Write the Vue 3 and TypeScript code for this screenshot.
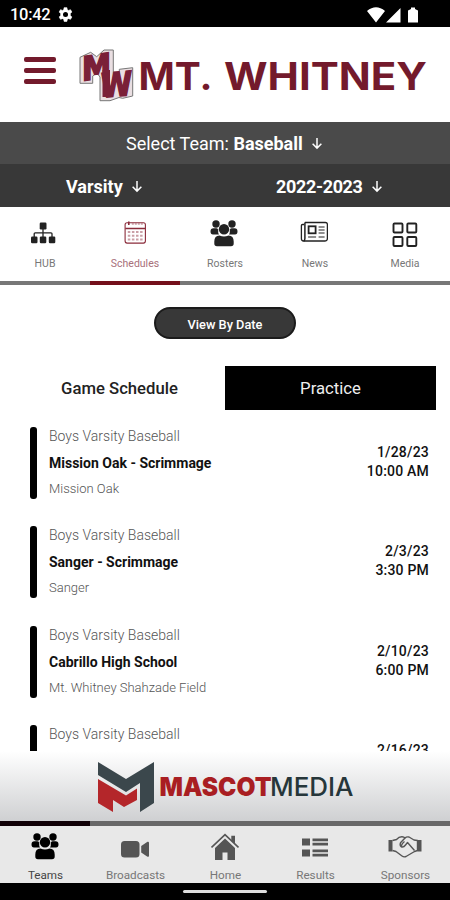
<script setup lang="ts">
interface Game {
  team: string
  title: string
  place: string
  date: string
  time: string
}

interface NavItem {
  id: string
  label: string
}

const topTabs: NavItem[] = [
  { id: 'hub', label: 'HUB' },
  { id: 'schedules', label: 'Schedules' },
  { id: 'people', label: 'Rosters' },
  { id: 'news', label: 'News' },
  { id: 'media', label: 'Media' },
]

const bottomTabs: NavItem[] = [
  { id: 'people', label: 'Teams' },
  { id: 'broadcasts', label: 'Broadcasts' },
  { id: 'home', label: 'Home' },
  { id: 'results', label: 'Results' },
  { id: 'sponsors', label: 'Sponsors' },
]

const games: Game[] = [
  { team: 'Boys Varsity Baseball', title: 'Mission Oak - Scrimmage', place: 'Mission Oak', date: '1/28/23', time: '10:00 AM' },
  { team: 'Boys Varsity Baseball', title: 'Sanger - Scrimmage', place: 'Sanger', date: '2/3/23', time: '3:30 PM' },
  { team: 'Boys Varsity Baseball', title: 'Cabrillo High School', place: 'Mt. Whitney Shahzade Field', date: '2/10/23', time: '6:00 PM' },
  { team: 'Boys Varsity Baseball', title: '', place: '', date: '2/16/23', time: '' },
]
</script>

<template>
  <div class="screen">
    <svg class="defs" width="0" height="0" aria-hidden="true">
      <symbol id="arrow" viewBox="0 0 12 14">
        <path d="M6 1V12M1.3 7.3L6 12L10.7 7.3" fill="none" stroke="currentColor" stroke-width="1.6" />
      </symbol>
      <symbol id="people" viewBox="0 0 28 27">
        <g fill="currentColor">
          <circle cx="6" cy="4" r="3.7" />
          <circle cx="22" cy="4" r="3.7" />
          <path d="M.5 11.5Q.5 8.300 3.500 8.300H6.500Q8 8.300 8.200 10Q7.900 13 9 14.500H3Q.5 14.500 .5 11.500ZM27.500 11.500Q27.500 8.300 24.500 8.300H21.500Q20 8.300 19.800 10Q20.100 13 19 14.500H25Q27.500 14.500 27.500 11.500Z" />
          <circle cx="14" cy="9.300" r="5.200" />
          <path d="M4.300 21.500Q4.300 15.500 9.500 15.500Q14 17.500 18.500 15.500Q23.700 15.500 23.700 21.500V23.500Q23.700 26.300 21 26.300H7Q4.300 26.300 4.300 23.500Z" />
        </g>
      </symbol>
      <symbol id="hub" viewBox="0 0 28 27">
        <g fill="currentColor">
          <rect x="9.700" y="2.500" width="6.800" height="7" rx="1.200" />
          <rect x="1" y="16.500" width="6.500" height="6.800" rx="1.200" />
          <rect x="9.800" y="16.500" width="6.500" height="6.800" rx="1.200" />
          <rect x="18.800" y="16.500" width="6.500" height="6.800" rx="1.200" />
        </g>
        <path d="M13 9V17M4.200 17V13.800Q4.200 12.800 5.200 12.800H21Q22 12.800 22 13.800V17" fill="none" stroke="currentColor" stroke-width="1.300" />
      </symbol>
      <symbol id="schedules" viewBox="0 0 28 27">
        <g fill="none" stroke="currentColor" transform="translate(1.300 -.500)">
          <rect x="3.800" y="3.300" width="20.300" height="20.300" rx="2" stroke-width="1.100" />
          <path d="M4 9H24" stroke-width="1.500" />
          <path d="M7.500 2V5.500" stroke-width="1.600" />
          <path d="M10.500 4.500H22" stroke-dasharray="2 1" stroke-width="1.500" opacity=".45" />
          <path d="M6.500 12.500H21.500M6.500 16.200H21.500M6.500 20H21.500" stroke-dasharray="2.500 1.600" stroke-width="2" opacity=".45" />
        </g>
      </symbol>
      <symbol id="news" viewBox="0 0 28 27">
        <g fill="none" stroke="currentColor" transform="translate(.600 0)">
          <path d="M4.300 2.500H24.800Q26.800 2.500 26.800 4.500V18.500Q26.800 21 24.500 21H3Q.8 21 .8 18.500V5.500Q.8 4.500 2 4.500H3.500" stroke-width="1.300" />
          <path d="M4.300 2.500V18.500Q4.300 20.500 3 21" stroke-width="1.500" />
          <rect x="8" y="6.300" width="7" height="7" stroke-width="1.800" />
          <path d="M18 7H24M18 10H24M18 13H24M7.500 17H15.500M18 17H24" stroke-width="1.200" />
        </g>
      </symbol>
      <symbol id="media" viewBox="0 0 28 27">
        <g fill="none" stroke="currentColor" stroke-width="1.900">
          <rect x="3.500" y="3.500" width="9" height="9" rx="1" />
          <rect x="17.300" y="3.500" width="9" height="9" rx="1" />
          <rect x="3.500" y="17" width="9" height="9" rx="1" />
          <rect x="17.300" y="17" width="9" height="9" rx="1" />
        </g>
      </symbol>
      <symbol id="broadcasts" viewBox="0 0 28 27">
        <rect x="0" y="8" width="18.500" height="16.500" rx="3.500" fill="currentColor" />
        <path d="M20.200 13L26.500 8.800Q28 8.300 28 10V22.800Q28 24.300 26.500 23.700L20.200 19.500Z" fill="currentColor" />
      </symbol>
      <symbol id="home" viewBox="0 0 28 27">
        <path d="M14 5.500L24 15V27H16.500V19.500H11.500V27H4V15Z" fill="currentColor" />
        <path d="M.5 14.500L14 1.700L27.500 14.500" fill="none" stroke="currentColor" stroke-width="1.700" />
        <path d="M20.300 2.800H24V11L20.300 7.500Z" fill="currentColor" />
      </symbol>
      <symbol id="results" viewBox="0 0 28 27">
        <path d="M1 5.500H9V12.500H1ZM1 16.500H9V23.500H1ZM11.500 5.500H27V8.200H11.500ZM11.500 9.800H27V12.500H11.500ZM11.500 16.500H27V19.200H11.500ZM11.500 20.800H27V23.500H11.500Z" fill="currentColor" />
      </symbol>
      <symbol id="sponsors" viewBox="0 0 34 27">
        <path d="M.5 7H4.500V18.500H.5ZM29.500 7H33.500V18.500H29.500Z" fill="currentColor" />
        <g fill="none" stroke="currentColor" stroke-width="1.400" stroke-linejoin="round">
          <path d="M4.500 7.500L8.500 6.500Q11 3.700 14 3.800Q16 4 17 5Q18.500 3.500 21 4L26 7L29.500 7.500V17.500L26.500 18.500L18 23.500Q16 24.500 14 23L8 18.500L4.500 17.500" />
          <path d="M17 5L12.500 9.800Q11.500 12.500 13.300 13.800Q15.500 14.800 17.500 12L19.500 9.500L26.500 17.500M13.500 14.500Q13 11 16.500 8.500" />
        </g>
      </symbol>
    </svg>

    <header class="status">
      <span class="clock">10:42</span>
      <svg class="gear" viewBox="0 0 24 24">
        <path d="M9.800 1H14.200L14.900 4.300L16.800 5.400L20 4.300L22.200 8.100L19.700 10.400V13.600L22.200 15.900L20 19.700L16.800 18.600L14.900 19.700L14.200 23H9.800L9.100 19.700L7.200 18.600L4 19.700L1.800 15.900L4.300 13.600V10.400L1.800 8.100L4 4.300L7.200 5.400L9.100 4.300Z" fill="#fff" stroke="#fff" stroke-linejoin="round" />
        <circle cx="12" cy="12" r="4" fill="#000" />
      </svg>
      <svg class="signals" viewBox="0 0 52 16">
        <path d="M0 4Q9 -3.500 18 4L9 15.500ZM19 15.500L33.500 1V15.500ZM41 3.500L44 2V.500H48V2L51 3.500V15.500H41Z" fill="#fff" />
      </svg>
    </header>

    <div class="brand">
      <div class="burger"><i></i><i></i><i></i></div>
      <svg class="wordmark" viewBox="0 0 352 60">
        <path class="plate" d="M2 9.300L12.700 4.300L18.700 8.700L26 2H35.300V31L38 29L41.300 31.500V21.300L54.700 19.700V48L44.700 50.300L41 49.500L32 52.700H22V29L19 25L14.700 28V35.300H2Z" />
        <rect class="stem" x="24.500" y="22" width="7.500" height="27" />
        <g class="mono">
          <text transform="translate(4 33) skewY(-9)" textLength="29" lengthAdjust="spacingAndGlyphs">M</text>
          <text transform="translate(23 49.500) skewY(-5)" textLength="31" lengthAdjust="spacingAndGlyphs">W</text>
        </g>
        <text class="name" x="60.500" y="42" textLength="74" lengthAdjust="spacingAndGlyphs">MT.</text>
        <text class="name" x="146" y="42" textLength="203" lengthAdjust="spacingAndGlyphs">WHITNEY</text>
      </svg>
    </div>

    <div class="select team">
      <span>Select Team: <b>Baseball</b></span>
      <svg class="arrow"><use href="#arrow" /></svg>
    </div>
    <div class="select pair">
      <div class="level"><b>Varsity</b><svg class="arrow"><use href="#arrow" /></svg></div>
      <div class="year"><b>2022-2023</b><svg class="arrow"><use href="#arrow" /></svg></div>
    </div>

    <nav class="tabs">
      <div v-for="(tab, i) in topTabs" :key="tab.id" class="tab" :class="{ active: i === 1 }">
        <svg class="icon"><use :href="'#' + tab.id" /></svg>
        <span>{{ tab.label }}</span>
      </div>
    </nav>

    <main class="content">
      <button class="pill">View By Date</button>
      <div class="switch">
        <div class="choice">Game Schedule</div>
        <div class="choice dark">Practice</div>
      </div>
      <article v-for="game in games" :key="game.date" class="game">
        <div class="bar"></div>
        <div class="info">
          <p class="squad">{{ game.team }}</p>
          <p class="title">{{ game.title }}</p>
          <p class="place">{{ game.place }}</p>
        </div>
        <div class="when">{{ game.date }}<br />{{ game.time }}</div>
      </article>
    </main>

    <div class="sponsor">
      <svg class="mascot" viewBox="0 0 258 54">
        <path d="M1 2L29 19L57 2V43L43 52V23L29 32L1 15Z" fill="#3b474c" />
        <path d="M1 19L29 35.500L40 28.500V40L27 47L16 40V52L1 43Z" fill="#b4262a" />
        <text class="mascot-bold" x="62.500" y="35.500" textLength="112" lengthAdjust="spacingAndGlyphs">MASCOT</text>
        <text class="mascot-light" x="173" y="35.500" textLength="83.500" lengthAdjust="spacingAndGlyphs">MEDIA</text>
      </svg>
    </div>

    <nav class="tabs bottom">
      <div v-for="(tab, i) in bottomTabs" :key="tab.id" class="tab" :class="{ active: i === 0 }">
        <svg class="icon" :class="tab.id"><use :href="'#' + tab.id" /></svg>
        <span>{{ tab.label }}</span>
      </div>
    </nav>
    <footer class="gesture"><i></i></footer>
  </div>
</template>

<style>
body {
  margin: 0;
  background: #fff;
}
</style>

<style scoped>
.screen {
  width: 450px;
  height: 900px;
  display: flex;
  flex-direction: column;
  overflow: hidden;
  background: #fff;
  font-family: Roboto, "Liberation Sans", sans-serif;
}
.screen > * {
  flex-shrink: 0;
  box-sizing: border-box;
}
.screen > .defs {
  display: block;
  height: 0;
}
.status {
  height: 27px;
  background: #000;
  color: #fff;
  display: flex;
  align-items: center;
  padding: 2px 31px 0 10px;
}
.clock {
  font-size: 16.5px;
  font-weight: 500;
  width: 48px;
  letter-spacing: -0.3px;
}
.gear {
  width: 15px;
  height: 15px;
}
.signals {
  width: 52px;
  height: 16px;
  margin-left: auto;
}
.brand {
  height: 95px;
  display: flex;
  align-items: flex-start;
  padding: 21px 0 0 24px;
}
.burger {
  display: flex;
  flex-direction: column;
  gap: 6px;
  padding-top: 9px;
  width: 54px;
}
.burger i {
  width: 32px;
  height: 5px;
  border-radius: 2px;
  background: #731a2c;
}
.wordmark {
  width: 352px;
  height: 60px;
}
.plate {
  fill: #eadfe2;
  stroke: #777;
  stroke-width: 1;
}
.stem {
  fill: #7a2038;
}
.mono text {
  font: 700 33px "DejaVu Sans", sans-serif;
  fill: #7a2038;
  stroke: #7a2038;
  stroke-width: 1.8;
}
.name {
  font: 700 38px Inter, sans-serif;
  fill: #731a2c;
}
.select {
  color: #fff;
  font-size: 18px;
  display: flex;
  align-items: center;
}
.select b {
  font-weight: 700;
}
.arrow {
  width: 12px;
  height: 13px;
  margin: 0 0 0 8px;
}
.team {
  height: 42px;
  background: #4a4a4a;
  padding: 1px 0 0 126px;
}
.pair {
  height: 43px;
  background: #383838;
  padding-top: 1px;
}
.pair > div {
  width: 225px;
  display: flex;
  align-items: center;
  box-sizing: border-box;
}
.level {
  padding-left: 66px;
}
.year {
  padding-left: 51px;
}
.year b {
  letter-spacing: -0.35px;
}
.tabs {
  height: 78px;
  display: grid;
  grid-template-columns: repeat(5, 90px);
}
.tab {
  display: flex;
  flex-direction: column;
  align-items: center;
  box-sizing: border-box;
  padding-top: 13px;
  border-bottom: 4px solid #777;
  color: #222;
}
.icon {
  width: 28px;
  height: 27px;
  margin-right: 2px;
}
.tab span {
  font-size: 10.500px;
  line-height: 14px;
  margin-top: 10px;
  color: #777;
}
.tab.active {
  border-color: #74101b;
  color: #8a2b3a;
}
.tab.active span {
  color: #a8707a;
}
.content {
  height: 466px;
  overflow: hidden;
  display: flex;
  flex-direction: column;
  padding-top: 22px;
}
.content > * {
  flex-shrink: 0;
}
.pill {
  align-self: center;
  width: 142px;
  height: 32px;
  border: 2px solid #1b1b1b;
  border-radius: 16px;
  background: #383838;
  color: #fff;
  font: 500 12.800px Roboto, sans-serif;
  padding: 2px 0 0;
}
.switch {
  display: flex;
  margin: 27px 14px 17px 14px;
}
.choice {
  flex: 1;
  height: 44px;
  line-height: 46px;
  text-align: center;
  font-size: 16.700px;
  font-weight: 500;
  color: #222;
}
.dark {
  background: #000;
  color: #eee;
  font-weight: 400;
}
.game {
  height: 99.300px;
  display: flex;
  padding: 0 21px 0 30px;
}
.bar {
  width: 7px;
  height: 72px;
  border-radius: 3px;
  background: #000;
}
.info {
  flex: 1;
  padding-left: 12px;
}
.info p {
  margin: 0;
}
.squad {
  font-size: 14px;
  font-weight: 300;
  line-height: 18px;
  color: #555;
}
.info .title {
  margin-top: 8px;
  font-size: 14px;
  font-weight: 700;
  line-height: 20px;
  color: #111;
}
.info .place {
  margin-top: 7px;
  font-size: 13px;
  font-weight: 300;
  line-height: 18px;
  color: #555;
}
.when {
  text-align: right;
  padding-top: 16px;
  font-size: 14px;
  font-weight: 500;
  line-height: 19px;
  letter-spacing: 0.2px;
  color: #111;
}
.sponsor {
  height: 70px;
  background: linear-gradient(#fff, #cfd0d2);
  padding: 9px 0 0 97px;
}
.mascot {
  display: block;
  width: 258px;
  height: 54px;
}
.mascot-bold {
  font: 900 25.500px Inter, sans-serif;
  fill: #a91e22;
}
.mascot-light {
  font: 500 25.500px Inter, sans-serif;
  fill: #26363a;
}
.bottom {
  height: 62px;
  background: #e8e8e8;
}
.bottom .tab {
  border-bottom: 0;
  border-top: 5px solid #686868;
  color: #555;
  padding-top: 7px;
}
.bottom .icon {
  margin-right: 0;
}
.bottom .sponsors {
  width: 34px;
}
.bottom .tab span {
  font-size: 11.700px;
  margin-top: 8px;
  margin-left: 1px;
}
.bottom .active {
  border-color: #100006;
  color: #000;
}
.bottom .tab.active span {
  color: #444;
}
.gesture {
  height: 17px;
  background: #000;
  display: flex;
  justify-content: center;
  align-items: center;
}
.gesture i {
  width: 84px;
  height: 3px;
  border-radius: 2px;
  background: #ddd;
}
</style>
